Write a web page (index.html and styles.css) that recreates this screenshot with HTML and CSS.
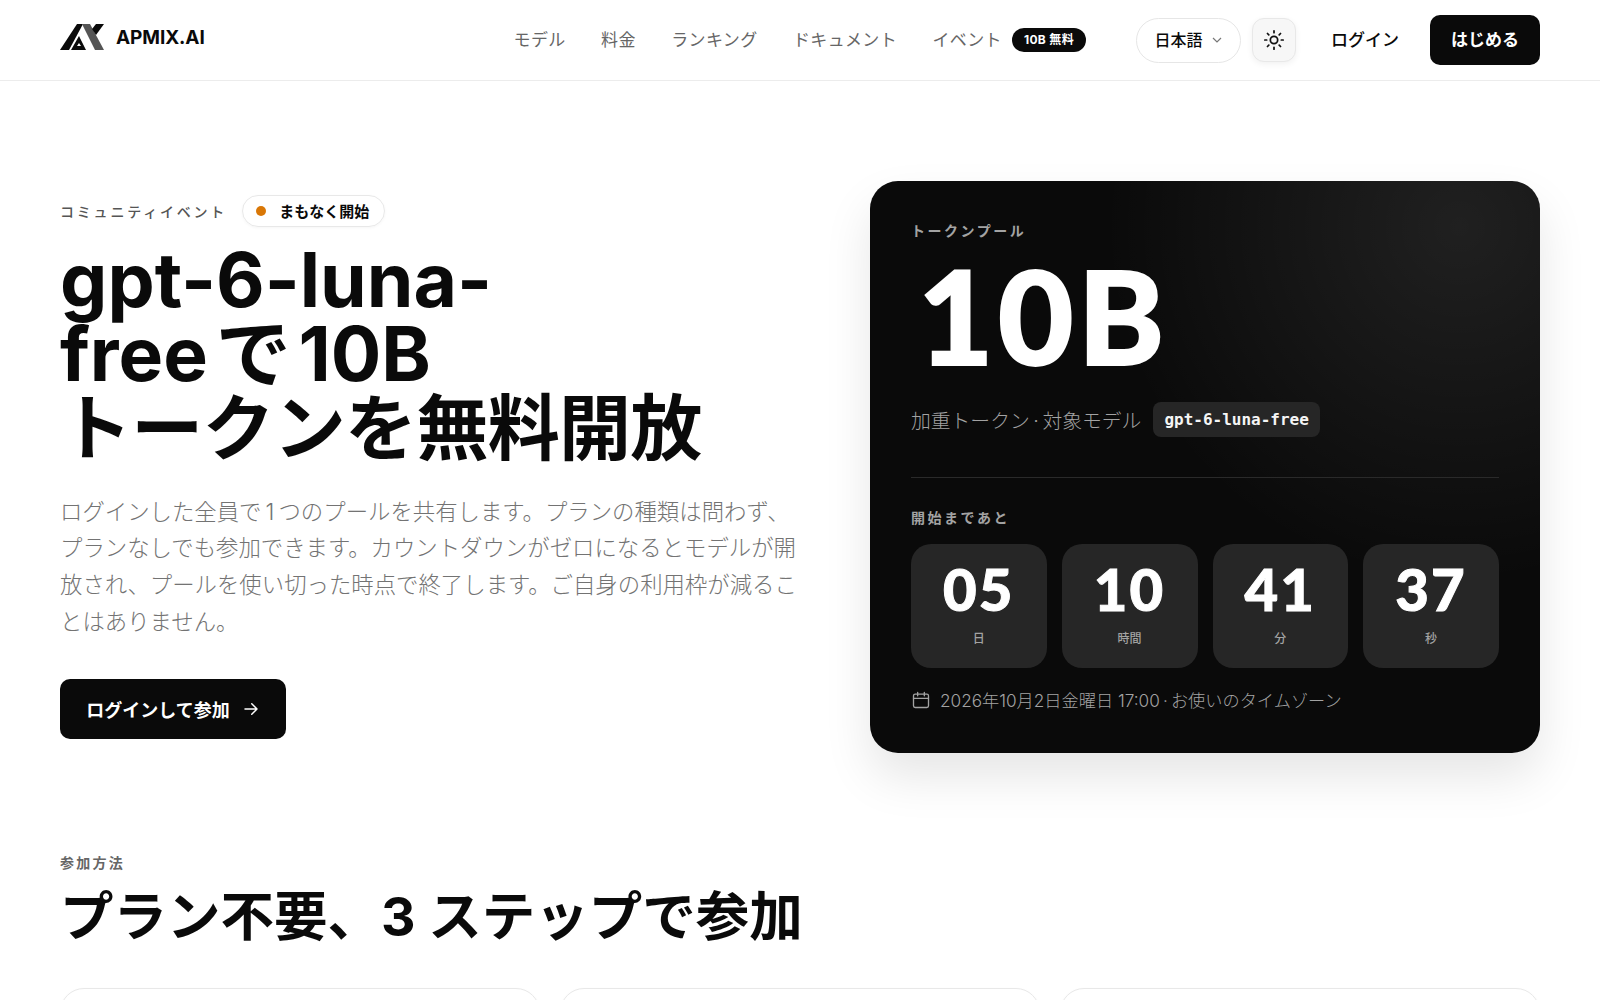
FILE: index.html
```html
<!DOCTYPE html>
<html lang="ja">
<head>
    <meta charset="UTF-8">
    <meta name="viewport" content="width=device-width, initial-scale=1.0">
    <title>gpt-6-luna-free | APMIX.AI</title>
    <link rel="stylesheet" href="styles.css">
</head>
<body>

    <!-- Header -->
    <header class="header">
        <a class="logo" href="#">
            <svg class="logo-mark" width="44" height="26" viewBox="0 0 44 26">
                <path fill="#0a0a0a" d="M17 0h6L9 26H0z"/>
                <path fill="#0a0a0a" d="M19 12l7 14H11z M19 19l-2 3h4z" fill-rule="evenodd"/>
                <path fill="#555" d="M22 0h8l14 26h-9z"/>
                <path fill="#0a0a0a" d="M36 0h8l-8 11-4-6z"/>
            </svg>
            <span class="logo-text">APMIX.AI</span>
        </a>
        <nav class="nav">
            <a href="#">モデル</a>
            <a href="#">料金</a>
            <a href="#">ランキング</a>
            <a href="#">ドキュメント</a>
            <a class="nav-event" href="#">イベント <span class="nav-badge">10B 無料</span></a>
        </nav>
        <div class="header-actions">
            <button class="lang-button"><span class="lang-text">日本語</span>
                <svg width="12" height="12" viewBox="0 0 12 12" fill="none" stroke="#777" stroke-width="1.2"><path d="M2 4l4 4 4-4"/></svg>
            </button>
            <button class="theme-button">
                <svg width="22" height="22" viewBox="0 0 24 24" fill="none" stroke="#111" stroke-width="1.9" stroke-linecap="round">
                    <circle cx="12" cy="12" r="4"/>
                    <path d="M12 2v2M12 20v2M2 12h2M20 12h2M4.9 4.9l1.4 1.4M17.7 17.7l1.4 1.4M4.9 19.1l1.4-1.4M17.7 6.3l1.4-1.4"/>
                </svg>
            </button>
            <a class="login-link" href="#">ログイン</a>
            <a class="start-button" href="#">はじめる</a>
        </div>
    </header>

    <!-- Hero -->
    <section class="hero">
        <div class="hero-left">
            <div class="hero-tags">
                <span class="eyebrow">コミュニティイベント</span>
                <span class="status-pill"><i class="status-dot"></i>まもなく開始</span>
            </div>
            <h1><span class="latin">gpt-6-luna-</span><br><span class="latin tight">free で 10B</span><br>トークンを無料開放</h1>
            <p class="hero-text">ログインした全員で&#8201;1&#8201;つのプールを共有します。プランの種類は問わず、プランなしでも参加できます。カウントダウンがゼロになるとモデルが開放され、プールを使い切った時点で終了します。ご自身の利用枠が減ることはありません。</p>
            <a class="join-button" href="#">ログインして参加
                <svg width="18" height="18" viewBox="0 0 24 24" fill="none" stroke="#fff" stroke-width="2" stroke-linecap="round" stroke-linejoin="round"><path d="M4 12h16M13 5l7 7-7 7"/></svg>
            </a>
        </div>

        <div class="pool-card">
            <div class="pool-label">トークンプール</div>
            <div class="pool-amount">10B</div>
            <div class="pool-sub">
                <span>加重トークン&#8201;·&#8201;対象モデル</span>
                <code class="model-tag">gpt-6-luna-free</code>
            </div>
            <div class="pool-divider"></div>
            <div class="pool-label count-label">開始まであと</div>
            <div class="countdown">
                <div class="count-box"><strong>05</strong><span>日</span></div>
                <div class="count-box"><strong>10</strong><span>時間</span></div>
                <div class="count-box"><strong>41</strong><span>分</span></div>
                <div class="count-box"><strong>37</strong><span>秒</span></div>
            </div>
            <div class="pool-date">
                <svg width="20" height="20" viewBox="0 0 24 24" fill="none" stroke="#a3a3a3" stroke-width="1.6" stroke-linecap="round" stroke-linejoin="round"><rect x="3" y="5" width="18" height="16" rx="2"/><path d="M3 10h18M8 3v4M16 3v4"/></svg>
                2026年10月2日金曜日 17:00&#8201;·&#8201;お使いのタイムゾーン
            </div>
        </div>
    </section>

    <!-- Steps -->
    <section class="steps">
        <div class="steps-label">参加方法</div>
        <h2>プラン不要、3 ステップで参加</h2>
        <div class="steps-grid">
            <div class="step-card"></div>
            <div class="step-card"></div>
            <div class="step-card"></div>
        </div>
    </section>

</body>
</html>
```

FILE: styles.css
```css
/* Basic page setup */
body {
    font-family: Inter, "Noto Sans CJK JP", sans-serif;
    background-color: #fff;
    color: #0a0a0a;
    margin: 0;
    height: 100vh;
    overflow: hidden;
}

a {
    text-decoration: none;
    color: inherit;
}

button {
    font-family: inherit;
    cursor: pointer;
}

/* Header */
.header {
    height: 81px;
    box-sizing: border-box;
    padding: 0 60px;
    border-bottom: 1px solid #ececec;
    display: flex;
    align-items: center;
}

.logo {
    display: flex;
    align-items: center;
    gap: 12px;
    margin-bottom: 6px;
}

.logo-text {
    font-size: 19px;
    font-weight: 700;
    letter-spacing: -0.005em;
}

.nav {
    margin-left: auto;
    margin-bottom: 4px;
    display: flex;
    align-items: center;
    gap: 35.5px;
    font-size: 17px;
    letter-spacing: 0.02em;
    color: #666;
}

.nav-event {
    display: flex;
    align-items: center;
    gap: 10px;
}

.nav-badge {
    margin-top: 4px;
    background-color: #0a0a0a;
    color: #fff;
    font-size: 12px;
    font-weight: 700;
    line-height: 24px;
    padding: 0 12px;
    border-radius: 12px;
}

.header-actions {
    display: flex;
    align-items: center;
    margin-left: 50px;
}

.lang-button {
    width: 105px;
    height: 45px;
    background-color: #fff;
    border: 1px solid #e6e6e6;
    border-radius: 23px;
    font-size: 16px;
    font-weight: 500;
    color: #0a0a0a;
    display: flex;
    align-items: center;
    justify-content: center;
    gap: 8px;
}

.lang-text {
    margin-bottom: 3px;
}

.theme-button {
    width: 44px;
    height: 44px;
    margin-left: 11px;
    padding: 0;
    background-color: #f7f7f7;
    border: 1px solid #e8e8e8;
    border-radius: 12px;
    box-shadow: 0 2px 6px rgba(0, 0, 0, 0.06);
    display: flex;
    align-items: center;
    justify-content: center;
}

.login-link {
    margin-left: 35px;
    margin-bottom: 4px;
    font-size: 17px;
    font-weight: 500;
}

.start-button {
    margin-left: 31px;
    width: 110px;
    line-height: 50px;
    text-align: center;
    background-color: #0a0a0a;
    color: #fff;
    border-radius: 10px;
    font-size: 17px;
    font-weight: 700;
}

/* Hero */
.hero {
    padding: 100px 60px 99px;
    display: grid;
    grid-template-columns: 1fr 670px;
    gap: 64px;
    align-items: center;
}

.hero-tags {
    display: flex;
    align-items: center;
    gap: 15px;
}

.eyebrow {
    font-size: 14px;
    font-weight: 500;
    letter-spacing: 0.2em;
    color: #555;
}

.status-pill {
    display: flex;
    align-items: center;
    gap: 13px;
    height: 32px;
    box-sizing: border-box;
    padding: 0 15px 0 13px;
    border: 1px solid #e8e8e8;
    border-radius: 16px;
    font-size: 15px;
    font-weight: 700;
    box-shadow: 0 1px 3px rgba(0, 0, 0, 0.04);
}

.status-dot {
    width: 10px;
    height: 10px;
    border-radius: 50%;
    background-color: #d97706;
}

h1 {
    margin: 16px 0 0;
    font-size: 72px;
    line-height: 73px;
    font-weight: 600;
    letter-spacing: -0.01em;
}

/* latin part of the headline is wider than the japanese part */
.latin {
    font-size: 75px;
    font-weight: 650;
    letter-spacing: 0;
}

.tight {
    word-spacing: -10px;
}

.hero-text {
    margin: 30px 0 0;
    max-width: 740px;
    font-size: 22.4px;
    line-height: 36.7px;
    font-weight: 300;
    color: #737373;
}

.join-button {
    margin-top: 39px;
    width: 226px;
    height: 60px;
    box-sizing: border-box;
    display: flex;
    align-items: center;
    justify-content: center;
    gap: 12px;
    background-color: #0a0a0a;
    color: #fff;
    border-radius: 10px;
    font-size: 18px;
    font-weight: 700;
}

/* Token pool card */
.pool-card {
    height: 572px;
    box-sizing: border-box;
    padding: 40px 41px;
    border-radius: 28px;
    background-color: #0a0a0a;
    background-image: radial-gradient(circle at 88% 8%, rgba(255, 255, 255, 0.09), transparent 45%);
    box-shadow: 0 24px 48px rgba(0, 0, 0, 0.1);
    color: #fff;
}

.pool-label {
    font-size: 14px;
    font-weight: 700;
    line-height: 20px;
    letter-spacing: 0.18em;
    color: #a3a3a3;
}

.pool-amount {
    font-family: Lato, sans-serif;
    font-size: 130px;
    font-weight: 900;
    line-height: 132px;
    letter-spacing: 0.035em;
    -webkit-text-stroke: 2px #fff;
    margin-top: 8px;
    padding-left: 7px;
}

.pool-sub {
    display: flex;
    align-items: center;
    gap: 12px;
    margin-top: 21px;
    font-size: 19.8px;
    font-weight: 300;
    color: #a3a3a3;
}

.model-tag {
    font-family: "DejaVu Sans Mono", monospace;
    font-size: 16px;
    font-weight: 700;
    line-height: 35px;
    padding: 0 11px;
    border-radius: 8px;
    background-color: #262626;
    color: #f5f5f5;
}

.pool-divider {
    margin-top: 40px;
    border-top: 1px solid #2a2a2a;
}

.count-label {
    margin-top: 30px;
}

.countdown {
    margin-top: 16px;
    display: grid;
    grid-template-columns: repeat(4, 1fr);
    gap: 15px;
}

.count-box {
    height: 124px;
    border-radius: 20px;
    background-color: #262626;
    display: flex;
    flex-direction: column;
    align-items: center;
}

.count-box strong {
    font-family: Lato, sans-serif;
    font-size: 58px;
    font-weight: 900;
    line-height: 58px;
    letter-spacing: 0.04em;
    -webkit-text-stroke: 1px #fff;
    margin-top: 16px;
}

.count-box span {
    margin-top: 11px;
    font-size: 12px;
    font-weight: 500;
    color: #a3a3a3;
}

.pool-date {
    margin-top: 19px;
    display: flex;
    align-items: center;
    gap: 9px;
    font-size: 17.2px;
    font-weight: 300;
    color: #a3a3a3;
}

/* Steps section */
.steps {
    padding: 0 60px;
}

.steps-label {
    font-size: 14px;
    font-weight: 700;
    letter-spacing: 0.16em;
    color: #666;
}

h2 {
    margin: 13px 0 0;
    font-size: 53.5px;
    line-height: 1.2;
    font-weight: 700;
}

.steps-grid {
    margin-top: 39px;
    display: grid;
    grid-template-columns: repeat(3, 1fr);
    gap: 20px;
}

.step-card {
    height: 220px;
    border: 1px solid #e8e8e8;
    border-radius: 24px;
    box-shadow: 0 1px 3px rgba(0, 0, 0, 0.04);
}
```
